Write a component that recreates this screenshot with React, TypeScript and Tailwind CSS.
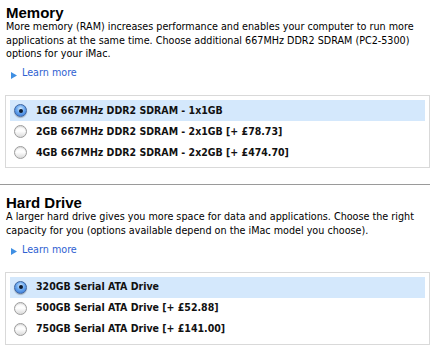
const memoryOptions = [
  { label: '1GB 667MHz DDR2 SDRAM - 1x1GB', checked: true },
  { label: '2GB 667MHz DDR2 SDRAM - 2x1GB [+ £78.73]', checked: false },
  { label: '4GB 667MHz DDR2 SDRAM - 2x2GB [+ £474.70]', checked: false },
];

const driveOptions = [
  { label: '320GB Serial ATA Drive', checked: true },
  { label: '500GB Serial ATA Drive [+ £52.88]', checked: false },
  { label: '750GB Serial ATA Drive [+ £141.00]', checked: false },
];

function Radio({ checked }: { checked: boolean }) {
  if (checked) {
    return (
      <span className="flex h-[13px] w-[13px] shrink-0 items-center justify-center rounded-full border border-[#3f659e] bg-[radial-gradient(circle_at_50%_35%,#d6ecff_0%,#6aa8ef_45%,#2a6bd0_100%)] shadow-[0_1px_1px_rgba(0,0,0,0.25)]">
        <span className="h-[4px] w-[4px] rounded-full bg-[#0d1a2e]" />
      </span>
    );
  }
  return (
    <span className="h-[13px] w-[13px] shrink-0 rounded-full border border-[#9c9c9c] bg-[linear-gradient(#f4f4f4,#ffffff_45%,#dadada)] shadow-[inset_0_1px_1px_rgba(0,0,0,0.12)]" />
  );
}

function LearnMore() {
  return (
    <div className="ml-[5px] mt-[5.5px] flex items-center gap-[5px] leading-[14px]">
      <svg width="6" height="7" viewBox="0 0 6 7" className="mt-[4px]">
        <polygon points="0,0 6,3.5 0,7" fill="#3f8fe3" />
      </svg>
      <a href="#" className="text-[#2f5fd1]">Learn more</a>
    </div>
  );
}

function Section({
  title,
  text,
  options,
}: {
  title: string;
  text: string;
  options: { label: string; checked: boolean }[];
}) {
  return (
    <div className="pt-[5px]">
      <h2 className="font-['Liberation_Sans',sans-serif] text-[15px] font-bold leading-[15px] text-black">{title}</h2>
      <p className="leading-[13.5px]">{text}</p>
      <LearnMore />
      <div className="-ml-px mt-[15px] w-[425px] border border-[#d9d9d9] p-[4px]">
        {options.map((o) => (
          <label
            key={o.label}
            className={`flex h-[21px] items-center gap-[9px] pl-[4px] ${o.checked ? 'bg-[#d4e8fc]' : ''}`}
          >
            <Radio checked={o.checked} />
            <span className="font-['DejaVu_Sans_Condensed','DejaVu_Sans',sans-serif] text-[10.5px] font-bold text-[#111]">
              {o.label}
            </span>
          </label>
        ))}
      </div>
    </div>
  );
}

export default function App() {
  return (
    <div className="min-h-[351px] bg-white px-[6px] font-['DejaVu_Sans_Condensed','DejaVu_Sans',sans-serif] text-[10.7px] text-black">
      <Section
        title="Memory"
        text="More memory (RAM) increases performance and enables your computer to run more applications at the same time. Choose additional 667MHz DDR2 SDRAM (PC2-5300) options for your iMac."
        options={memoryOptions}
      />
      <div className="-ml-[6px] mb-[5px] mt-[16px] h-px w-[430px] bg-[#9a9a9a]" />
      <Section
        title="Hard Drive"
        text="A larger hard drive gives you more space for data and applications. Choose the right capacity for you (options available depend on the iMac model you choose)."
        options={driveOptions}
      />
    </div>
  );
}
